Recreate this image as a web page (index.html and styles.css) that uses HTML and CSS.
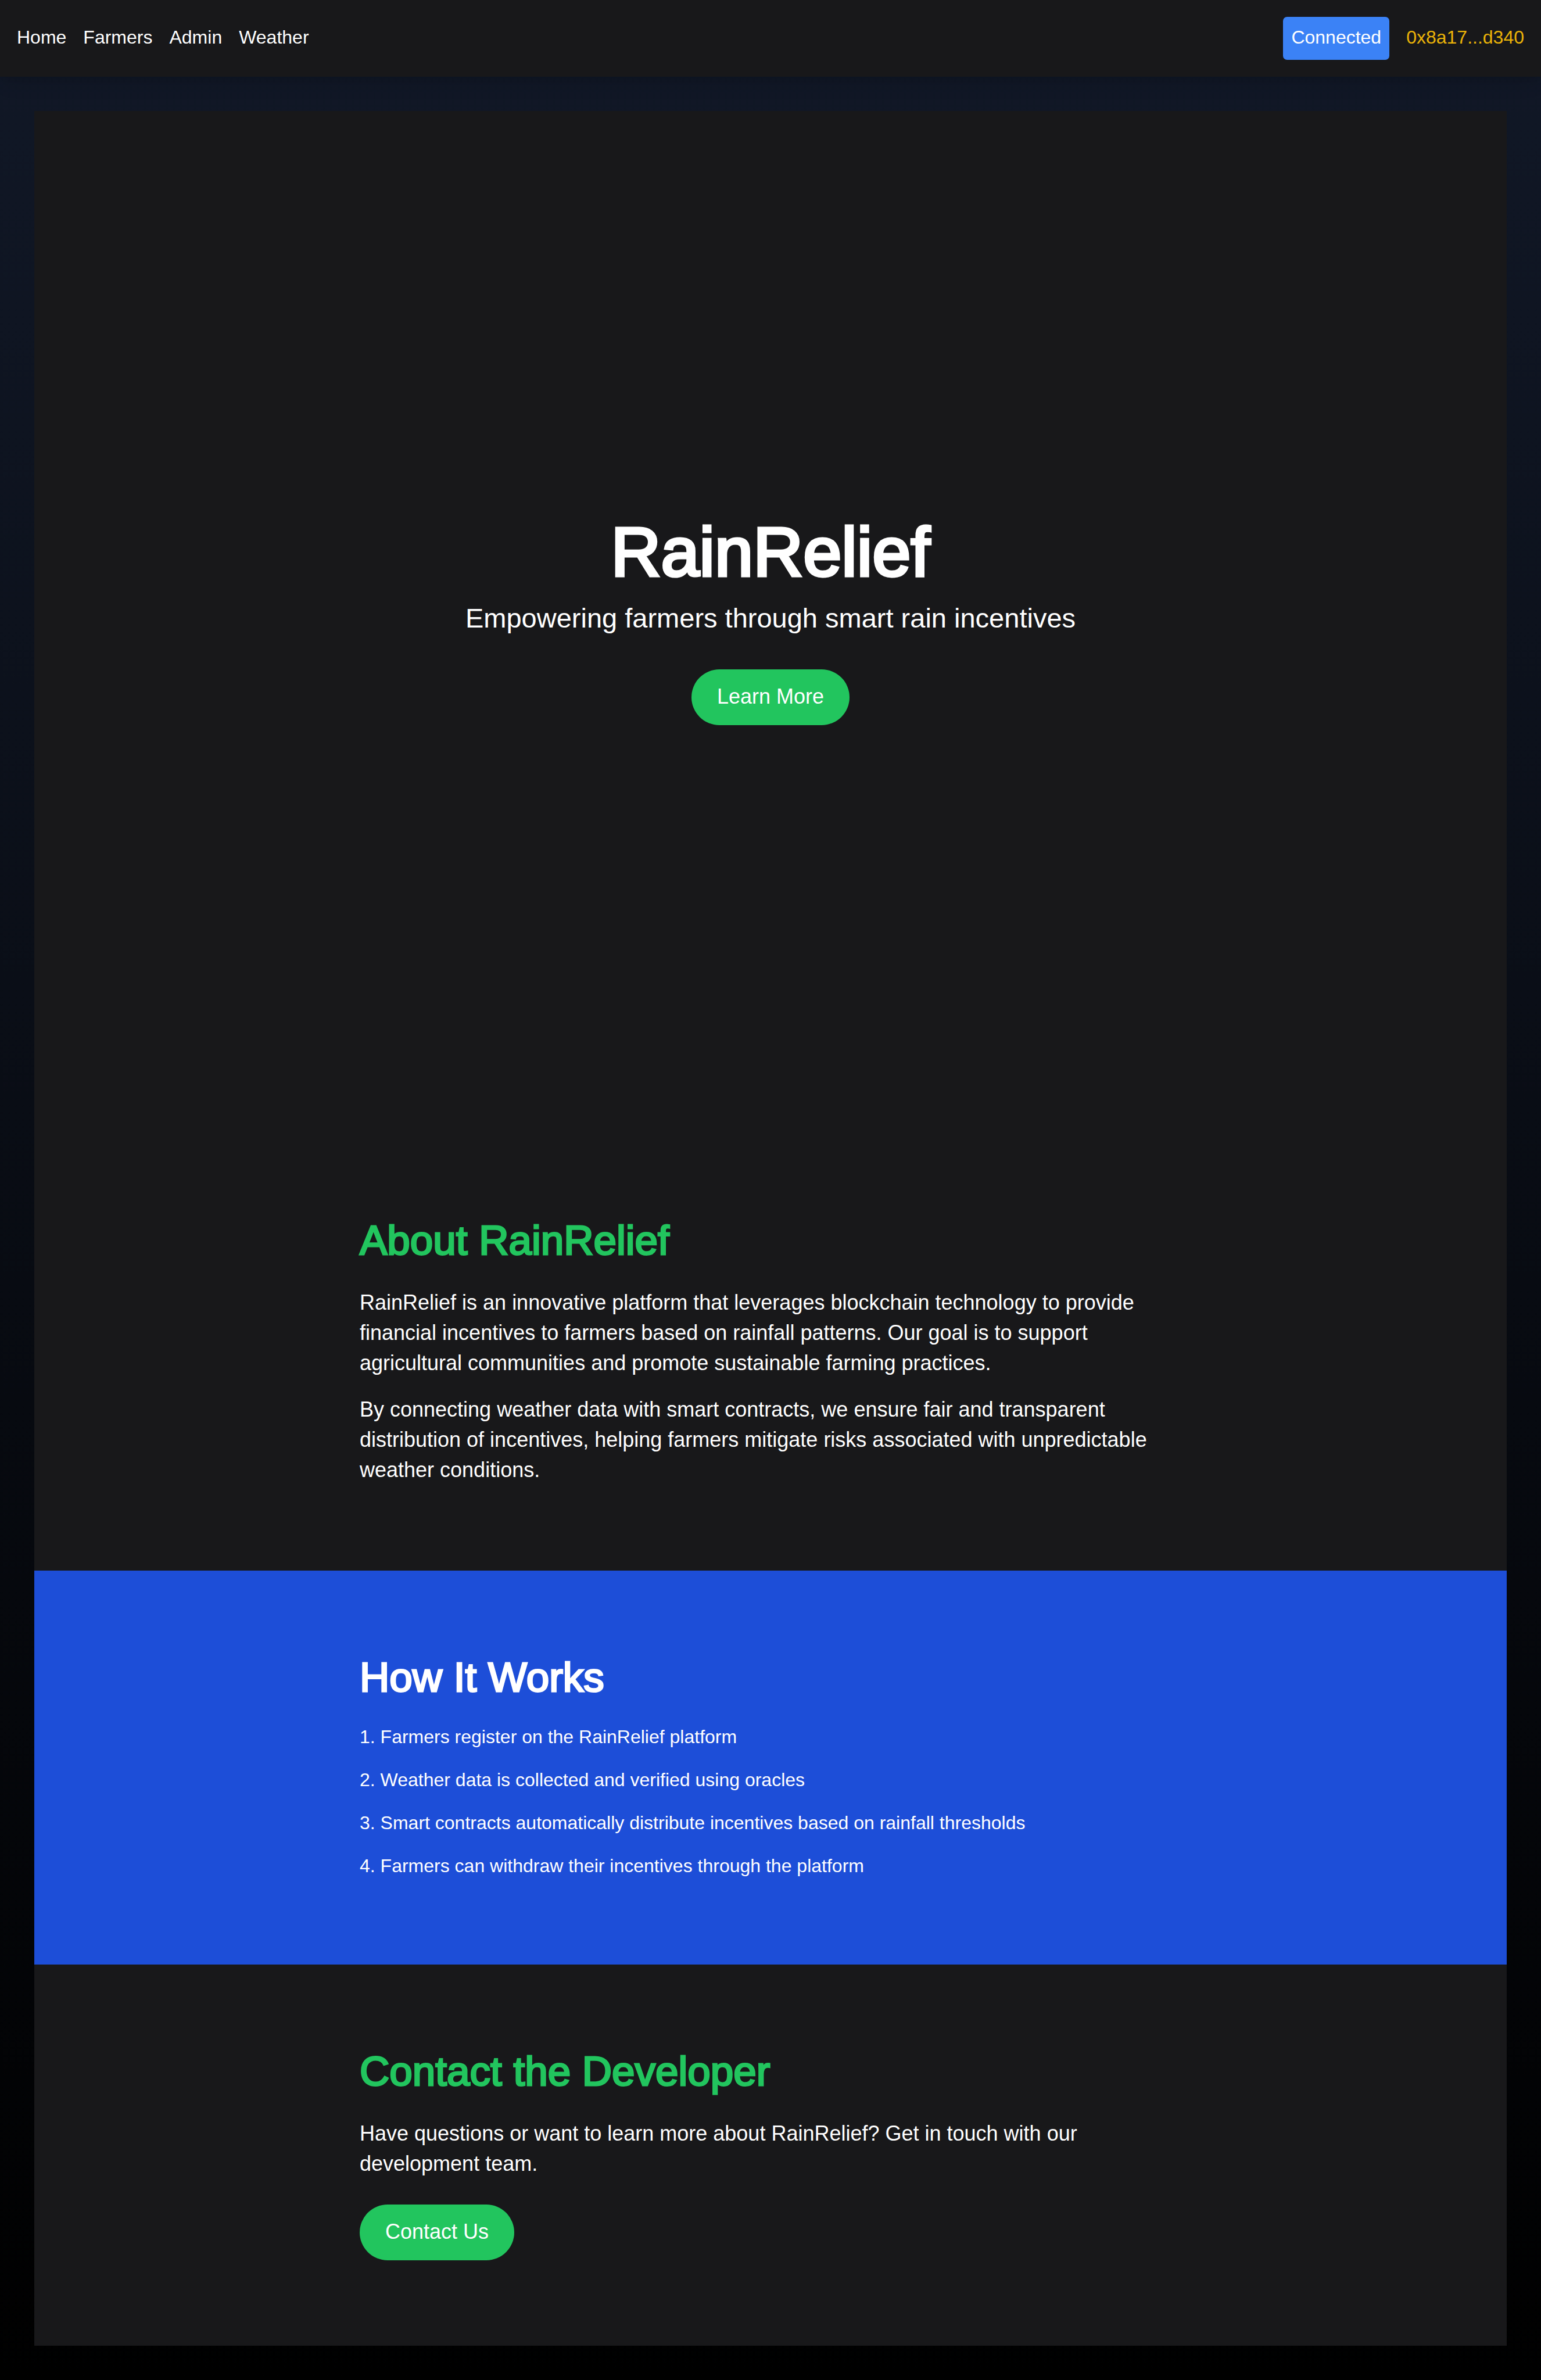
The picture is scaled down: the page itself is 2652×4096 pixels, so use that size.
FILE: index.html
```html
<!DOCTYPE html>
<html lang="en">
<head>
<meta charset="utf-8">
<meta name="viewport" content="width=device-width, initial-scale=1">
<title>RainRelief</title>
<link rel="stylesheet" href="styles.css">
</head>
<body class="page">
<header class="header">
  <nav class="nav">
    <a class="nav-link" href="#">Home</a>
    <a class="nav-link" href="#">Farmers</a>
    <a class="nav-link" href="#">Admin</a>
    <a class="nav-link" href="#">Weather</a>
  </nav>
  <div class="wallet">
    <button class="wallet-button" type="button">Connected</button>
    <span class="wallet-address">0x8a17...d340</span>
  </div>
</header>
<main class="main">
  <section class="hero">
    <h1 class="hero-title">RainRelief</h1>
    <p class="hero-subtitle">Empowering farmers through smart rain incentives</p>
    <a class="cta" href="#about">Learn More</a>
  </section>
  <section class="section" id="about">
    <div class="container">
      <h2 class="section-title">About RainRelief</h2>
      <div class="copy">
        <p class="text">RainRelief is an innovative platform that leverages blockchain technology to provide financial incentives to farmers based on rainfall patterns. Our goal is to support agricultural communities and promote sustainable farming practices.</p>
        <p class="text">By connecting weather data with smart contracts, we ensure fair and transparent distribution of incentives, helping farmers mitigate risks associated with unpredictable weather conditions.</p>
      </div>
    </div>
  </section>
  <section class="section section-blue">
    <div class="container">
      <h2 class="section-title section-title-light">How It Works</h2>
      <ol class="steps">
        <li>Farmers register on the RainRelief platform</li>
        <li>Weather data is collected and verified using oracles</li>
        <li>Smart contracts automatically distribute incentives based on rainfall thresholds</li>
        <li>Farmers can withdraw their incentives through the platform</li>
      </ol>
    </div>
  </section>
  <section class="section">
    <div class="container">
      <h2 class="section-title">Contact the Developer</h2>
      <p class="text contact-text">Have questions or want to learn more about RainRelief? Get in touch with our development team.</p>
      <a class="cta" href="#">Contact Us</a>
    </div>
  </section>
</main>
</body>
</html>
```
FILE: styles.css
```css
*, *::before, *::after {
  box-sizing: border-box;
}

h1, h2, p, ol {
  margin: 0;
  padding: 0;
}

.page {
  display: flex;
  flex-direction: column;
  min-height: 100vh;
  margin: 0;
  background: linear-gradient(to bottom, #111827, #000000);
  color: #ffffff;
  font-family: "Liberation Sans", Arial, sans-serif;
  font-size: 32px;
  line-height: 42px;
}

.header {
  display: flex;
  justify-content: space-between;
  align-items: center;
  padding: 29px;
  background: #18181a;
  box-shadow: 0 18px 28px -6px rgba(0, 0, 0, 0.1), 0 7px 11px -7px rgba(0, 0, 0, 0.1);
}

.nav,
.wallet {
  display: flex;
  align-items: center;
  gap: 29px;
}

.nav-link,
.wallet-address {
  padding-bottom: 4px;
}

.nav-link {
  color: inherit;
  text-decoration: none;
}

.wallet-button {
  padding: 14px 14px 18px;
  border: 0;
  border-radius: 7px;
  background: #3b82f6;
  color: inherit;
  font: inherit;
}

.wallet-address {
  color: #eab308;
}

.main {
  display: flex;
  flex: 1;
  flex-direction: column;
  margin: 59px;
  background: #18181a;
}

.hero {
  display: flex;
  flex: 1;
  flex-direction: column;
  align-items: center;
  justify-content: center;
  text-align: center;
}

/* Headings use the regular face, thickened with a stroke */
.hero-title {
  margin-bottom: 29px;
  font-size: 119px;
  font-weight: 400;
  line-height: 110px;
  -webkit-text-stroke: 5px currentColor;
}

.hero-subtitle {
  margin-bottom: 59px;
  font-size: 47px;
  line-height: 59px;
}

.cta {
  display: inline-block;
  padding: 21px 44px 23px;
  border-radius: 48px;
  background: #22c55e;
  color: #ffffff;
  font-size: 36px;
  line-height: 52px;
  text-decoration: none;
}

.section {
  padding: 147px 0;
}

.section-blue {
  background: #1d4ed8;
}

.container {
  display: flex;
  flex-direction: column;
  align-items: flex-start;
  max-width: 1414px;
  margin: 0 auto;
}

.section-title {
  margin-bottom: 44px;
  color: #22c55e;
  font-size: 71px;
  font-weight: 400;
  line-height: 74px;
  -webkit-text-stroke: 3px currentColor;
}

.section-title-light {
  color: #ffffff;
}

.copy {
  display: flex;
  flex-direction: column;
  gap: 28px;
}

.text {
  font-size: 36px;
  line-height: 52px;
}

.contact-text {
  margin-bottom: 44px;
}

.steps {
  display: flex;
  flex-direction: column;
  gap: 32px;
  padding-bottom: 2px;
  list-style: decimal inside;
}
```
